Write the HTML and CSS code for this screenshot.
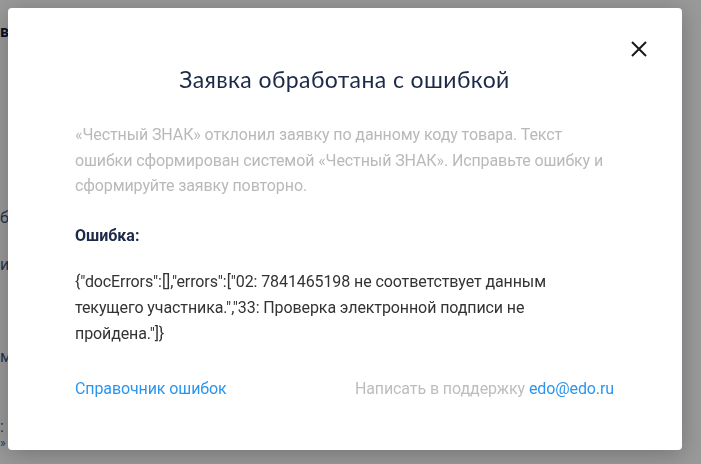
FILE: index.html
```html
<!DOCTYPE html>
<html lang="ru">
<head>
    <meta charset="UTF-8">
    <meta name="viewport" content="width=device-width, initial-scale=1.0">
    <title>Заявка обработана с ошибкой</title>
    <link rel="stylesheet" href="styles.css">
</head>
<body>
    <div class="page">
        <div class="side">
            <div class="side-title">в</div>
            <div class="side-link gap-1">б</div>
            <div class="side-link">и</div>
            <div class="side-link gap-2">м</div>
            <div class="side-link gap-3">:</div>
            <div class="side-link small">»</div>
        </div>
    </div>

    <div class="overlay">
        <div class="modal">
            <button class="close" aria-label="Закрыть">
                <svg width="16" height="16" viewBox="0 0 16 16">
                    <path d="M1 1L15 15M15 1L1 15" stroke="#1a1a1a" stroke-width="2" fill="none"/>
                </svg>
            </button>
            <h2 class="modal-title">Заявка обработана с ошибкой</h2>
            <p class="modal-text">«Честный ЗНАК» отклонил заявку по данному коду товара. Текст ошибки сформирован системой «Честный ЗНАК». Исправьте ошибку и сформируйте заявку повторно.</p>
            <div class="error-label">Ошибка:</div>
            <p class="error-body">{"docErrors":[],"errors":["02: 7841465198 не соответствует данным текущего участника.","33: Проверка электронной подписи не пройдена."]}</p>
            <div class="modal-footer">
                <a href="#" class="link">Справочник ошибок</a>
                <span class="support">Написать в поддержку <a href="#" class="link">edo@edo.ru</a></span>
            </div>
        </div>
    </div>
</body>
</html>
```

FILE: styles.css
```css
body {
    margin: 0;
    font-family: Roboto, "Liberation Sans", sans-serif;
    background: #fff;
    height: 100vh;
    overflow: hidden;
}
.page {
    height: 100%;
}
.side {
    width: 8px;
    padding-top: 22px;
}
.side-title {
    font-weight: bold;
    font-size: 16px;
    color: #0d1b3a;
    line-height: 20px;
}
.side-link {
    font-size: 16px;
    line-height: 20px;
    color: #3b5a86;
    margin-top: 27px;
}
.gap-1 {
    margin-top: 166px;
}
.gap-2 {
    margin-top: 72px;
}
.gap-3 {
    margin-top: 50px;
}
.side-link.small {
    margin-top: 0;
    font-size: 12px;
    line-height: 12px;
}
.overlay {
    position: fixed;
    inset: 0;
    background: rgba(0, 0, 0, 0.4);
}
.modal {
    position: relative;
    box-sizing: border-box;
    margin: 8px 0 0 8px;
    width: 674px;
    height: 442px;
    padding: 57px 68px 0 67px;
    background: #fff;
    border-radius: 4px;
    box-shadow: 0 4px 24px rgba(0, 0, 0, 0.25);
}
.close {
    position: absolute;
    top: 33px;
    right: 35px;
    width: 16px;
    height: 16px;
    padding: 0;
    border: none;
    background: none;
    cursor: pointer;
    display: flex;
}
.modal-title {
    margin: 0;
    text-align: center;
    font-family: Lato, "Open Sans", sans-serif;
    font-weight: normal;
    font-size: 23px;
    line-height: 28px;
    color: #1c2a48;
    letter-spacing: 0.4px;
}
.modal-text {
    margin: 29px 0 0;
    font-size: 16px;
    line-height: 25.6px;
    color: #b9b9b9;
    letter-spacing: -0.1px;
}
.error-label {
    margin-top: 24px;
    font-size: 16px;
    line-height: 25.6px;
    font-weight: bold;
    color: #1c2a48;
}
.error-body {
    margin: 21px 0 0;
    font-size: 16px;
    line-height: 25.6px;
    color: #333;
    letter-spacing: -0.1px;
}
.modal-footer {
    margin-top: 30px;
    display: flex;
    justify-content: space-between;
    font-size: 16px;
    line-height: 25.6px;
    letter-spacing: -0.1px;
}
.link {
    color: #2b95ee;
    text-decoration: none;
}
.support {
    color: #bdbdbd;
}
```
